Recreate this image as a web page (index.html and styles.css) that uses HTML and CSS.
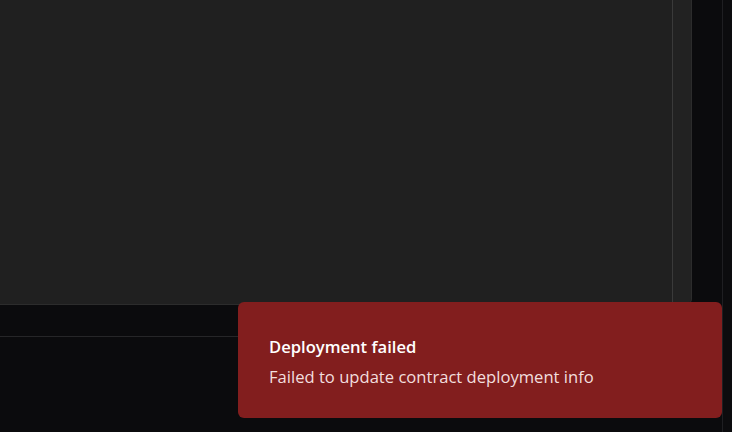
FILE: index.html
```html
<!DOCTYPE html>
<html>
<head>
<meta charset="utf-8">
<link rel="stylesheet" href="styles.css">
</head>
<body>
<div class="app">
  <div class="main">
    <div class="card">
      <div class="card-body"></div>
      <div class="card-scroll"></div>
    </div>
    <div class="bar"></div>
    <div class="footer"></div>
  </div>
  <div class="side"></div>
</div>
<div class="toast">
  <div class="toast-title">Deployment failed</div>
  <div class="toast-desc">Failed to update contract deployment info</div>
</div>
</body>
</html>
```
FILE: styles.css
```css
html, body {
  margin: 0;
  padding: 0;
  height: 100%;
  background: #0b0b0d;
  font-family: "Open Sans", "Noto Sans", sans-serif;
  overflow: hidden;
}
.app {
  display: flex;
  height: 432px;
}
.main {
  width: 722px;
  display: flex;
  flex-direction: column;
}
.side {
  flex: 1;
  border-left: 1px solid #1f1f22;
  background: #0c0c0e;
}
.card {
  width: 691px;
  height: 304px;
  display: flex;
  background: #202020;
  border-right: 1px solid #2c2c2c;
  border-bottom: 1px solid #2c2c2c;
  border-bottom-right-radius: 6px;
}
.card-body {
  width: 672px;
  border-right: 1px solid #3a3a3a;
}
.card-scroll {
  flex: 1;
  background: #222222;
  border-bottom-right-radius: 6px;
}
.bar {
  height: 31px;
  border-bottom: 1px solid #262628;
}
.footer {
  flex: 1;
}
.toast {
  position: fixed;
  right: 10px;
  bottom: 14px;
  width: 484px;
  height: 116px;
  box-sizing: border-box;
  padding: 34px 31px 0;
  background: #821e1e;
  border-radius: 6px;
  color: #fff;
}
.toast-title {
  font-size: 16.6px;
  font-weight: 600;
  line-height: 22px;
}
.toast-desc {
  margin-top: 8px;
  font-size: 16.6px;
  line-height: 22px;
  color: #f2dede;
}
```
